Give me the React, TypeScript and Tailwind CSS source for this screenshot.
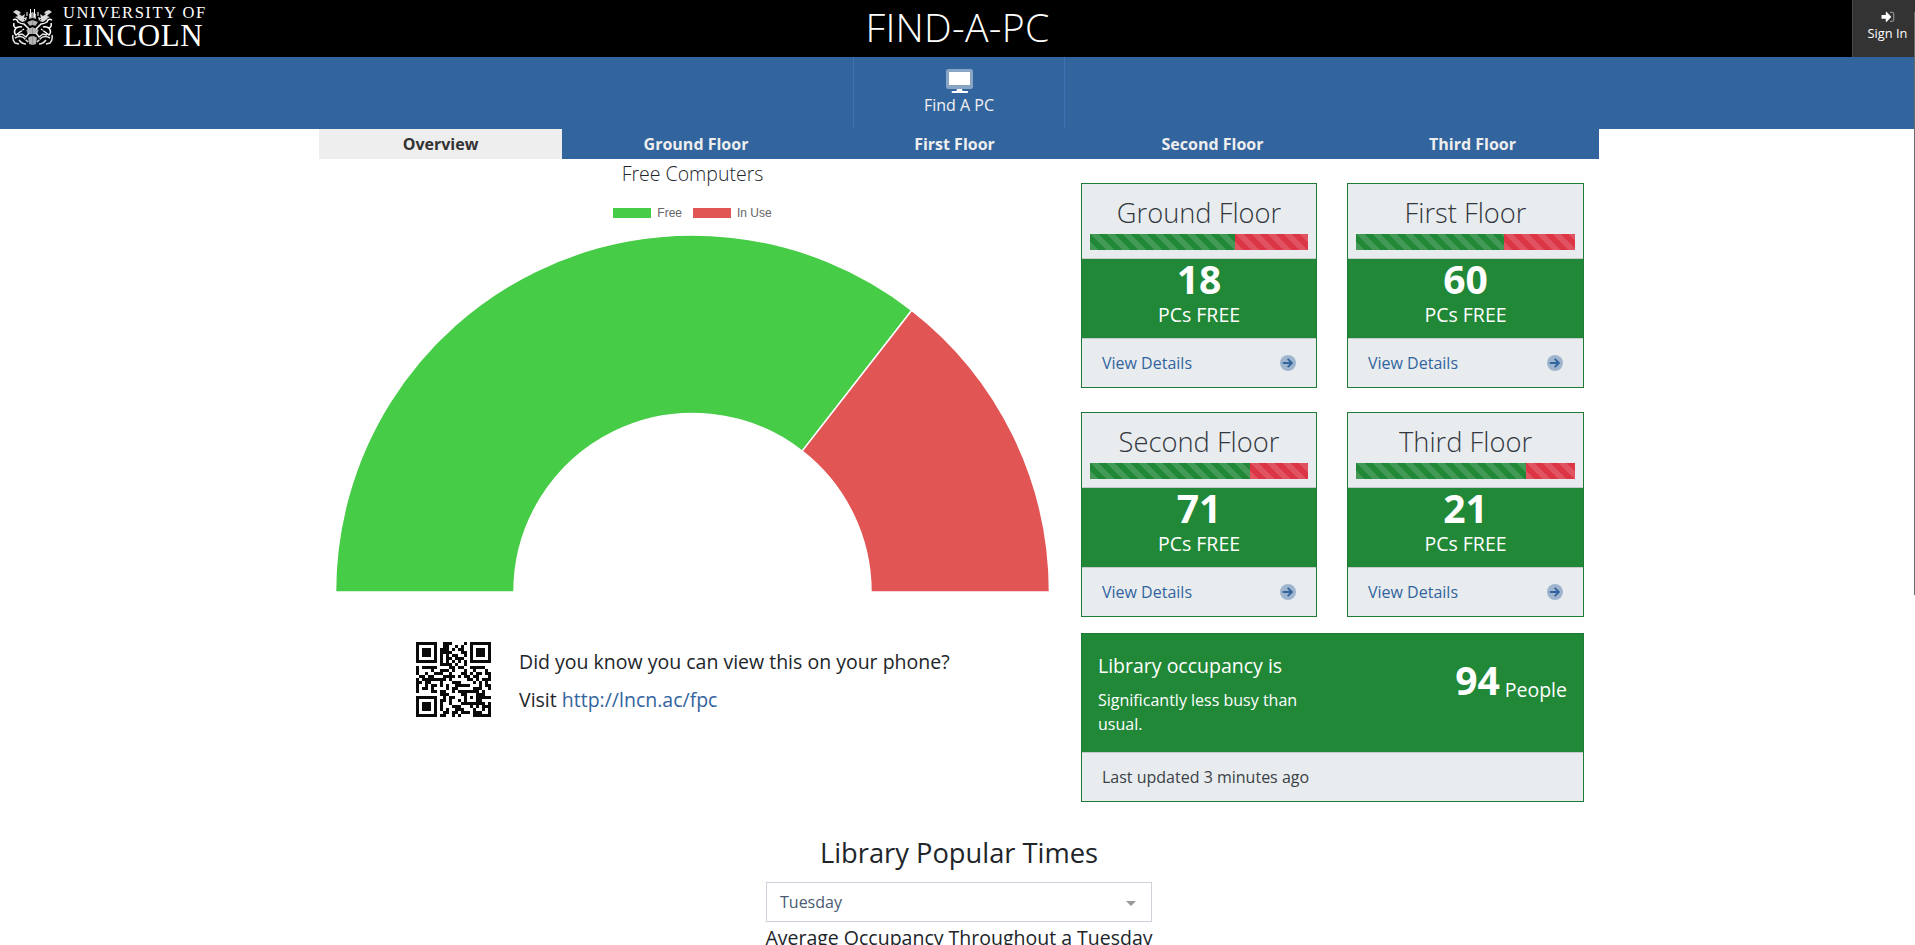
type Matrix = number[][];

const QR_SIZE = 25;

/** Reed-Solomon remainder of `data` over GF(256). */
function errorCodewords(data: number[], count: number): number[] {
  const exp: number[] = [];
  const log: number[] = [];
  let x = 1;
  for (let i = 0; i < 255; i++) {
    exp[i] = x;
    log[x] = i;
    x <<= 1;
    if (x & 256) x ^= 285;
  }
  const mul = (a: number, b: number) => (a && b ? exp[(log[a] + log[b]) % 255] : 0);
  let g = [1];
  for (let i = 0; i < count; i++) {
    const r: number[] = new Array(g.length + 1).fill(0);
    g.forEach((c, j) => {
      r[j] ^= c;
      r[j + 1] ^= mul(c, exp[i]);
    });
    g = r;
  }
  const rem = [...data, ...new Array(count).fill(0)];
  for (let i = 0; i < data.length; i++) {
    const f = rem[i];
    for (let j = 0; j < g.length; j++) rem[i + j] ^= mul(g[j], f);
  }
  return rem.slice(data.length);
}

/** Version 2 QR matrix, error level M, mask 2. */
function qrMatrix(text: string): Matrix {
  const byte = (v: number) => v.toString(2).padStart(8, "0");
  let bits = "0100" + byte(text.length);
  for (const c of text) bits += byte(c.charCodeAt(0));
  bits += "0000";
  while (bits.length % 8) bits += "0";
  const data: number[] = [];
  for (let i = 0; i < bits.length; i += 8) data.push(parseInt(bits.slice(i, i + 8), 2));
  let p = 0;
  while (data.length < 28) data.push(p++ % 2 ? 17 : 236);
  const stream = [...data, ...errorCodewords(data, 16)].map(byte).join("");

  const m: Matrix = Array.from({ length: QR_SIZE }, () => new Array(QR_SIZE).fill(-1));
  const set = (r: number, c: number, v: boolean) => {
    if (r >= 0 && c >= 0 && r < QR_SIZE && c < QR_SIZE) m[r][c] = v ? 1 : 0;
  };
  for (const [R, C] of [[3, 3], [3, 21], [21, 3]])
    for (let i = -4; i <= 4; i++)
      for (let j = -4; j <= 4; j++) {
        const q = Math.max(Math.abs(i), Math.abs(j));
        set(R + i, C + j, q !== 2 && q !== 4);
      }
  for (let i = -2; i <= 2; i++)
    for (let j = -2; j <= 2; j++) set(18 + i, 18 + j, Math.max(Math.abs(i), Math.abs(j)) !== 1);
  for (let i = 8; i < 17; i++) {
    set(6, i, i % 2 === 0);
    set(i, 6, i % 2 === 0);
  }
  let rem = 2;
  for (let i = 0; i < 10; i++) rem = (rem << 1) ^ ((rem >>> 9) * 0x537);
  const format = ((2 << 10) | rem) ^ 0x5412;
  const bit = (i: number) => ((format >>> i) & 1) === 1;
  for (let i = 0; i <= 5; i++) set(i, 8, bit(i));
  set(7, 8, bit(6));
  set(8, 8, bit(7));
  set(8, 7, bit(8));
  for (let i = 9; i < 15; i++) set(8, 14 - i, bit(i));
  for (let i = 0; i < 8; i++) set(8, QR_SIZE - 1 - i, bit(i));
  for (let i = 8; i < 15; i++) set(QR_SIZE - 15 + i, 8, bit(i));
  set(QR_SIZE - 8, 8, true);

  let k = 0;
  for (let right = QR_SIZE - 1; right >= 1; right -= 2) {
    if (right === 6) right = 5;
    for (let v = 0; v < QR_SIZE; v++)
      for (let j = 0; j < 2; j++) {
        const c = right - j;
        const r = ((right + 1) & 2) === 0 ? QR_SIZE - 1 - v : v;
        if (m[r][c] === -1) {
          const value = k < stream.length ? Number(stream[k]) : 0;
          k++;
          m[r][c] = value ^ (c % 3 === 0 ? 1 : 0);
        }
      }
  }
  return m;
}

const qrPath = qrMatrix("http://lncn.ac/fpc")
  .flatMap((row, y) => row.map((v, x) => (v ? `M${x} ${y}h1v1h-1z` : "")))
  .join("");

function Crest() {
  const half = (
    <g>
      <path d="M1 3 L4 1 L7 2 L9 4 L7 5 L10 7 L13 5 L12 9 L15 8 L14 12 L10 13 L7 11 L5 9 L3 8 L6 7 L4 5 Z" fill="#fff" opacity=".85" />
      <path d="M1 11 Q5 9 6 13 Q9 15 12 15 L17 20 M2 14 Q1 18 4 19 Q8 17 10 18 M4 19 Q1 23 4 26 L8 23 L12 20" stroke="#fff" strokeWidth="1.5" fill="none" />
      <path d="M1 26 Q0 31 3 34 L7 35 M3 29 Q8 26 12 29 L16 33 M7 31 Q10 35 14 35 M6 26 L10 25 L14 28 L17 24" stroke="#fff" strokeWidth="1.5" fill="none" opacity=".9" />
      <path d="M17 5 L20.500 3 V9 L17 10 Z M15 13 L20.500 11 V16 L17 17 Z M14 21 L20.500 18 V25 L16 25 Z M16 28 L20.500 27 V36 L17 35 Z" fill="#fff" opacity=".7" />
      <path d="M12 10 L19 19 M9 21 L15 22 M13 31 L19 26" stroke="#000" strokeWidth=".8" />
      <path d="M18.500 0 V8 M15 3 V7" stroke="#fff" strokeWidth="1" />
    </g>
  );
  return (
    <svg width="41" height="37" viewBox="0 0 41 37" className="mt-[9px] ml-[12px] block shrink-0">
      {half}
      <g transform="translate(41 0) scale(-1 1)">{half}</g>
    </svg>
  );
}

function MonitorIcon() {
  return (
    <svg width="27" height="24" viewBox="0 0 27 24" className="block">
      <path fillRule="evenodd" fill="#fff" opacity=".42" d="M2.500 0h22A2.500 2.500 0 0 1 27 2.500v15a2.500 2.500 0 0 1-2.500 2.500h-22A2.500 2.500 0 0 1 0 17.500v-15A2.500 2.500 0 0 1 2.500 0zM3 3v13.500h21V3z" />
      <path fill="#fff" d="M3 3h21v13.300H3zM11 20h5l.5 2h4.500a.8.8 0 0 1 .3 2H6.400a.8.8 0 0 1 .3-2h3.800z" />
    </svg>
  );
}

function SignInIcon() {
  return (
    <svg width="14" height="12" viewBox="0 0 14 12" className="block">
      <path d="M9 1.300h2.200a1.500 1.500 0 0 1 1.500 1.500v6a1.500 1.500 0 0 1-1.500 1.500H9" fill="none" stroke="#8a8a8a" strokeWidth="1.300" />
      <path fill="#fff" d="M0.500 4h4.300V1.300c0-.5.500-.7.900-.4l4.300 4.500c.3.300.3.600 0 .9l-4.300 4.500c-.4.300-.9.100-.9-.4V7.800H.5z" />
    </svg>
  );
}

function ArrowCircle() {
  return (
    <svg width="16" height="16" viewBox="0 0 16 16" className="block">
      <circle cx="8" cy="8" r="8" fill="#32649e" opacity=".4" />
      <path d="M3.500 8h8.200M8.200 4.300 11.900 8l-3.700 3.700" fill="none" stroke="#32649e" strokeWidth="1.900" strokeLinejoin="round" strokeLinecap="round" />
    </svg>
  );
}

const stripes =
  "bg-[linear-gradient(45deg,rgba(255,255,255,.15)_25%,transparent_25%,transparent_50%,rgba(255,255,255,.15)_50%,rgba(255,255,255,.15)_75%,transparent_75%,transparent)] bg-[length:16px_16px]";

interface Floor {
  name: string;
  stretch: string;
  free: number;
  percent: number;
}

const floors: Floor[] = [
  { name: "Ground Floor", stretch: "[font-stretch:94%]", free: 18, percent: 66.67 },
  { name: "First Floor", stretch: "[font-stretch:99%]", free: 60, percent: 67.6 },
  { name: "Second Floor", stretch: "[font-stretch:93%]", free: 71, percent: 73.3 },
  { name: "Third Floor", stretch: "[font-stretch:95%]", free: 21, percent: 77.78 },
];

function FloorCard({ floor }: { floor: Floor }) {
  return (
    <div className="flex h-[205px] flex-col border border-[#207a37] bg-[#e8ecef]">
      <div className="h-[75px] border-b border-[#c7cacd] px-2 pt-3">
        <h3 className={`text-center text-[27.3px] leading-[34px] font-[330] text-[#32373d] ${floor.stretch}`}>{floor.name}</h3>
        <div className="mt-1 flex h-4">
          <div className={`bg-[#218838] ${stripes}`} style={{ width: `${floor.percent}%` }} />
          <div className={`flex-1 bg-[#dc3545] ${stripes}`} />
        </div>
      </div>
      <div className="h-[79px] bg-[#218838] text-center text-white">
        <div className="text-[39px] leading-[40px] font-bold [font-stretch:97%]">{floor.free}</div>
        <div className="mt-1 text-[19.5px] leading-6">PCs FREE</div>
      </div>
      <div className="flex flex-1 items-center justify-between border-t border-[#c7cacd] px-5 text-[#32649e]">
        <a className="text-base leading-6 [font-stretch:98%]">View Details</a>
        <ArrowCircle />
      </div>
    </div>
  );
}

function Doughnut() {
  const cx = 373.5;
  const cy = 372;
  const R = 357;
  const r = 178.5;
  const a = (52.1 * Math.PI) / 180;
  const ox = cx + R * Math.cos(a);
  const oy = cy - R * Math.sin(a);
  const ix = cx + r * Math.cos(a);
  const iy = cy - r * Math.sin(a);
  return (
    <svg width="747" height="375" viewBox="0 0 747 375" className="block">
      <path d={`M${cx - R} ${cy}A${R} ${R} 0 0 1 ${ox} ${oy}L${ix} ${iy}A${r} ${r} 0 0 0 ${cx - r} ${cy}Z`} fill="#46cc46" stroke="#fff" strokeWidth="1.500" />
      <path d={`M${ox} ${oy}A${R} ${R} 0 0 1 ${cx + R} ${cy}H${cx + r}A${r} ${r} 0 0 0 ${ix} ${iy}Z`} fill="#e25555" stroke="#fff" strokeWidth="1.500" />
    </svg>
  );
}

export default function App() {
  return (
    <div className="flex h-[945px] overflow-hidden bg-white font-['Open_Sans','Noto_Sans',sans-serif] text-[#212529]">
      <div className="flex min-w-0 flex-1 flex-col">
        <header className="grid h-[57px] shrink-0 grid-cols-[1fr_auto_1fr] bg-black text-white">
          <div className="flex">
            <Crest />
            <div className="ml-[10px] flex flex-col font-['Liberation_Serif',serif] whitespace-nowrap">
              <span className="mt-[5px] text-[16.500px] leading-[16px] tracking-[1.550px]">UNIVERSITY OF</span>
              <span className="mt-[2px] text-[31px] leading-[26px] tracking-[0.600px]">LINCOLN</span>
            </div>
          </div>
          <h1 className="text-[39.2px] leading-[54px] font-light tracking-[0.3px]">FIND-A-PC</h1>
          <div className="flex justify-end">
            <a className="flex w-[63px] flex-col items-center border-l border-[#4a4a4a] bg-[#333] pt-[11px] pl-[7px]">
              <SignInIcon />
              <span className="text-[12.800px] leading-5 [font-stretch:97%]">Sign In</span>
            </a>
          </div>
        </header>

        <nav className="flex h-[72px] shrink-0 justify-center bg-[#32649e] pl-[3px]">
          <a className="flex w-[212px] flex-col items-center border-x border-[#3d73b5] pt-3 text-[#f2f2f2]">
            <MonitorIcon />
            <span className="text-base leading-6 [font-stretch:98%]">Find A PC</span>
          </a>
        </nav>

        <div className="ml-[319px] w-[1280px]">
          <div className="grid h-[30px] grid-cols-[243px_268px_249px_267px_253px] bg-[#32649e] text-center text-base leading-[30px] font-bold text-[#eee] [font-stretch:95%]">
            <a className="bg-[#eee] text-[#333] [font-stretch:98%]">Overview</a>
            <a>Ground Floor</a>
            <a>First Floor</a>
            <a>Second Floor</a>
            <a>Third Floor</a>
          </div>

          <div className="flex">
            <section className="w-[747px]">
              <h2 className="pt-[3px] text-center text-[19.5px] leading-6 font-[340] [font-stretch:95%]">Free Computers</h2>
              <div className="mt-5 flex h-[14px] items-center justify-center font-['Liberation_Sans',Arial,sans-serif] text-xs leading-[14px] text-[#666]">
                <span className="mr-[6px] h-[10px] w-[38px] bg-[#46cc46]" />
                Free
                <span className="mr-[6px] ml-[11px] h-[10px] w-[38px] bg-[#e25555]" />
                In Use
              </div>
              <Doughnut />
              <div className="mt-[47px] flex pl-[97px]">
                <svg width="75" height="75" viewBox="0 0 25 25" shapeRendering="crispEdges" className="block">
                  <path d={qrPath} fill="#0a0a0a" />
                </svg>
                <div className="ml-7 flex flex-col gap-[14px] pt-2 text-[19.5px] leading-6 [font-stretch:92.3%]">
                  <p>Did you know you can view this on your phone?</p>
                  <p>
                    Visit <a className="text-[#32649e] [font-stretch:90%]">http://lncn.ac/fpc</a>
                  </p>
                </div>
              </div>
            </section>

            <section className="flex-1 px-[15px] pt-6">
              <div className="grid grid-cols-[236px_237px] gap-x-[30px] gap-y-6">
                {floors.map((floor) => (
                  <FloorCard key={floor.name} floor={floor} />
                ))}
              </div>
              <div className="mt-4 h-[169px] border border-[#207a37] bg-[#e8ecef]">
                <div className="flex h-[118px] justify-between bg-[#218838] px-4 text-white">
                  <div className="w-[220px] pt-5">
                    <h4 className="text-[19.5px] leading-6 [font-stretch:92%]">Library occupancy is</h4>
                    <p className="mt-[10px] text-base leading-6 [font-stretch:98%]">Significantly less busy than usual.</p>
                  </div>
                  <div className="flex pt-[26px]">
                    <span className="text-[39px] leading-[40px] font-bold [font-stretch:97%]">94</span>
                    <span className="mt-[18px] ml-[5px] text-[19.5px] leading-6 [font-stretch:93%]">People</span>
                  </div>
                </div>
                <div className="flex h-[49px] items-center border-t border-[#c7cacd] px-5 text-base text-[#3c4146] [font-stretch:98%]">Last updated 3 minutes ago</div>
              </div>
            </section>
          </div>

          <section className="mt-[34px] flex flex-col items-center">
            <h2 className="text-[27.3px] leading-[34px] [font-stretch:92.8%]">Library Popular Times</h2>
            <div className="mt-3 flex h-10 w-[386px] items-center justify-between border border-[#ced0da] pr-[15px] pl-[13px] text-base text-[#495b70]">
              <span className="[font-stretch:96%]">Tuesday</span>
              <span className="mt-[2px] border-x-[5px] border-t-[5px] border-x-transparent border-t-[#999]" />
            </div>
            <h4 className="mt-1 text-[19.5px] leading-6 [font-stretch:92%]">Average Occupancy Throughout a Tuesday</h4>
          </section>
        </div>
      </div>
      <div className="-ml-px h-[583px] w-px shrink-0 translate-y-3 bg-[#6b6b6b]" />
    </div>
  );
}
